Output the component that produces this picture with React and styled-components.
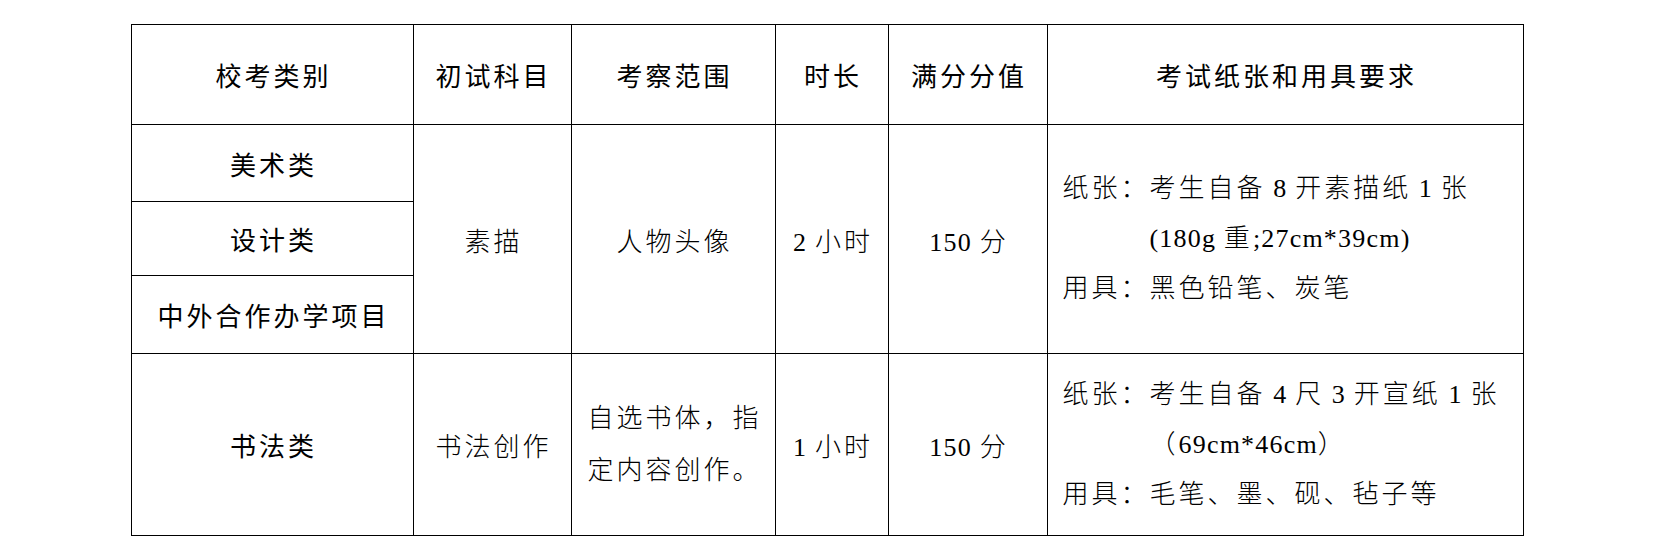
import React from "react";
import styled, { createGlobalStyle } from "styled-components";

const GlobalStyle = createGlobalStyle`
  html, body {
    margin: 0;
    background: #fff;
  }
`;

const Sheet = styled.div`
  display: grid;
  grid-template-columns: 282px 158px 204px 113px 159px 476px;
  grid-template-rows: 100px 77px 74px 78px 182px;
  width: max-content;
  margin: 24px auto 0;
  border-top: 1px solid #000;
  border-left: 1px solid #000;
  color: #000;
`;

const Cell = styled.div`
  display: flex;
  flex-direction: column;
  justify-content: center;
  align-items: ${({ $left }) => ($left ? "flex-start" : "center")};
  padding: ${({ $left }) => ($left ? "0 0 0 15px" : "0 0 0 3px")};
  border-right: 1px solid #000;
  border-bottom: 1px solid #000;
  grid-row: ${({ $span }) => ($span ? `span ${$span}` : "auto")};
  font-family: ${({ $head }) =>
    $head
      ? '"Noto Sans CJK SC", "Liberation Sans", sans-serif'
      : '"Liberation Serif", "Noto Sans CJK SC", serif'};
  font-weight: ${({ $head }) => ($head ? 400 : 300)};
  font-size: 26px;
  letter-spacing: 3px;
  white-space: nowrap;
`;

const Num = styled.span`
  letter-spacing: 1.2px;
`;

const Line = styled.div`
  line-height: ${({ $tall }) => ($tall ? "52px" : "50px")};
  padding-left: ${({ $indent }) => ($indent ? "87px" : "0")};
`;

const headers = ["校考类别", "初试科目", "考察范围", "时长", "满分分值", "考试纸张和用具要求"];

export default function App() {
  return (
    <>
      <GlobalStyle />
      <Sheet>
        {headers.map((h) => (
          <Cell $head key={h}>
            {h}
          </Cell>
        ))}

        <Cell $head>美术类</Cell>
        <Cell $span={3}>素描</Cell>
        <Cell $span={3}>人物头像</Cell>
        <Cell $span={3}>
          <div>
            <Num>2 </Num>小时
          </div>
        </Cell>
        <Cell $span={3}>
          <div>
            <Num>150 </Num>分
          </div>
        </Cell>
        <Cell $span={3} $left>
          <Line>
            纸张：考生自备<Num> 8 </Num>开素描纸<Num> 1 </Num>张
          </Line>
          <Line $indent>
            <Num>(180g </Num>重<Num>;27cm*39cm)</Num>
          </Line>
          <Line>用具：黑色铅笔、炭笔</Line>
        </Cell>
        <Cell $head>设计类</Cell>
        <Cell $head>中外合作办学项目</Cell>

        <Cell $head>书法类</Cell>
        <Cell>书法创作</Cell>
        <Cell>
          <Line $tall>自选书体，指</Line>
          <Line $tall>定内容创作。</Line>
        </Cell>
        <Cell>
          <div>
            <Num>1 </Num>小时
          </div>
        </Cell>
        <Cell>
          <div>
            <Num>150 </Num>分
          </div>
        </Cell>
        <Cell $left>
          <Line>
            纸张：考生自备<Num> 4 </Num>尺<Num> 3 </Num>开宣纸<Num> 1 </Num>张
          </Line>
          <Line $indent>
            （<Num>69cm*46cm</Num>）
          </Line>
          <Line>用具：毛笔、墨、砚、毡子等</Line>
        </Cell>
      </Sheet>
    </>
  );
}
